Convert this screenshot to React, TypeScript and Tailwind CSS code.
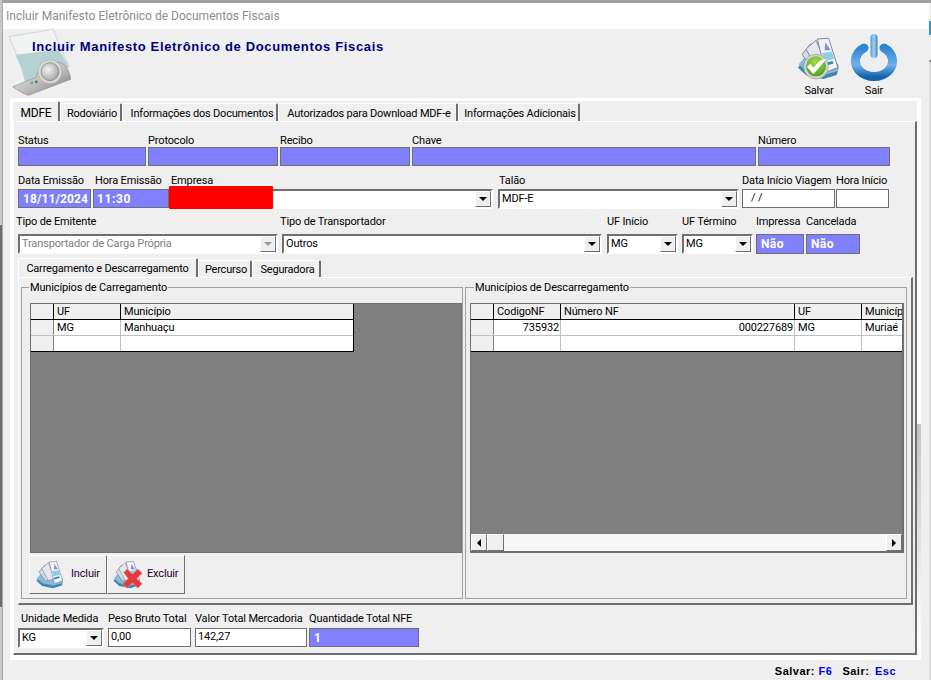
import React from "react";

function Docs() {
  return (
    <>
      <path d="M36 128 L62 92 L158 128 L152 150 L112 162 L62 152 Z" fill="#3f86b4" />
      <path d="M38 118 L66 84 L158 118 L156 138 L112 150 L64 140 Z" fill="#86bbd8" />
      <path d="M48 88 L74 56 L112 118 L78 130 Z" fill="#d5d9e4" stroke="#6f7889" strokeWidth="2.5" />
      <path d="M60 72 L90 46 L122 118 L90 128 Z" fill="#e4e7f0" stroke="#6f7889" strokeWidth="2.5" />
      <path d="M94 42 L128 40 L156 128 L118 142 Z" fill="#f2f4fb" stroke="#6a7488" strokeWidth="2.5" />
      <path d="M118 52 L134 76 L116 76 Z" fill="#7f8cdf" />
      <path d="M108 84 L138 80 L144 102 L114 108 Z" fill="#94cbe4" />
      <path d="M114 114 L140 108 L142 116 L116 122 Z" fill="#2f90aa" />
    </>
  );
}

function Stack({ size }: { size: number }) {
  return (
    <svg width={size} height={size} viewBox="34 38 128 128" className="shrink-0">
      <Docs />
    </svg>
  );
}

function Logo() {
  return (
    <svg width="72" height="72" viewBox="24 24 216 216" className="shrink-0">
      <defs>
        <linearGradient id="base" x1="0" y1="0" x2="1" y2="1">
          <stop offset="0" stopColor="#efefef" />
          <stop offset="0.55" stopColor="#bcbcbc" />
          <stop offset="1" stopColor="#6f6f6f" />
        </linearGradient>
        <radialGradient id="disc" cx="0.4" cy="0.4" r="0.7">
          <stop offset="0" stopColor="#f4f4f4" />
          <stop offset="1" stopColor="#9c9c9c" />
        </radialGradient>
      </defs>
      <path d="M27 50 L160 28 C172 65 192 105 207 140 L78 195 C68 145 47 95 27 50 Z" fill="#f1f3f2" stroke="#c4c8c8" strokeWidth="2" />
      <path d="M46 104 C90 100 135 95 177 88 L207 140 L78 195 C72 160 60 130 46 104 Z" fill="#b5d2d3" />
      <path d="M38 200 L108 172 C116 128 178 112 198 140 C206 152 211 165 212 178 L86 226 C70 222 52 210 38 200 Z" fill="url(#base)" stroke="#808080" strokeWidth="1.5" />
      <circle cx="150" cy="155" r="36" fill="#d9d9d9" stroke="#9a9a9a" strokeWidth="1.5" />
      <circle cx="150" cy="155" r="27" fill="url(#disc)" stroke="#7e7e7e" strokeWidth="2" />
      <circle cx="96" cy="188" r="4.5" fill="#5fbf50" />
      <circle cx="109" cy="185" r="4.5" fill="#5a66c8" />
      <circle cx="122" cy="180" r="4.5" fill="#e0cf40" />
    </svg>
  );
}

function SaveIcon() {
  return (
    <svg width="42" height="44" viewBox="36 36 126 132">
      <defs>
        <radialGradient id="green" cx="0.5" cy="0.3" r="0.75">
          <stop offset="0" stopColor="#a8de4e" />
          <stop offset="1" stopColor="#469a1d" />
        </radialGradient>
      </defs>
      <Docs />
      <circle cx="90" cy="125" r="37" fill="#d5d5d5" stroke="#979797" strokeWidth="2" />
      <circle cx="90" cy="124" r="30" fill="url(#green)" />
      <path d="M63 125 L82 148 L122 101 L104 105 L82 128 L73 116 Z" fill="#fff" />
    </svg>
  );
}

function PowerIcon() {
  return (
    <svg width="48" height="48" viewBox="0 0 48 48">
      <defs>
        <linearGradient id="ring" x1="0" y1="0" x2="0" y2="1">
          <stop offset="0" stopColor="#2f86cf" />
          <stop offset="0.6" stopColor="#6fb2e8" />
          <stop offset="1" stopColor="#1465b0" />
        </linearGradient>
        <linearGradient id="bar" x1="0" y1="0" x2="1" y2="0">
          <stop offset="0" stopColor="#4a98d8" />
          <stop offset="0.5" stopColor="#a9d3f2" />
          <stop offset="1" stopColor="#2f7fc6" />
        </linearGradient>
      </defs>
      <path d="M14 14 A18.5 15.5 0 1 0 34 14" fill="none" stroke="url(#ring)" strokeWidth="9" strokeLinecap="round" />
      <rect x="20.5" y="0" width="7" height="24" rx="3.5" fill="url(#bar)" />
    </svg>
  );
}

function CrossIcon() {
  return (
    <svg width="21" height="21" viewBox="0 0 24 24" className="absolute left-[14px] top-[12px]">
      <path d="M2 5 L6 1 L12 7 L18 1 L23 6 L17 12 L23 18 L18 23 L12 17 L6 23 L1 18 L7 12 Z" fill="#e8383c" stroke="#c8a0a2" strokeWidth="0.8" />
    </svg>
  );
}

function Tab({ label, active, className }: { label: string; active?: boolean; className: string }) {
  return (
    <div
      className={`flex items-center justify-center tracking-[-0.2px] whitespace-nowrap bg-[#efefef] border-r-2 border-r-[#6e6e6e] border-t border-t-white rounded-tr-[2px] ${
        active ? "" : "mt-[2px] pl-[3px] border-l border-l-white"
      } ${className}`}
    >
      {label}
    </div>
  );
}

function Label({ children, className }: { children: React.ReactNode; className: string }) {
  return <div className={`whitespace-nowrap leading-[13px] ${className}`}>{children}</div>;
}

function Blue({ className, children }: { className: string; children?: React.ReactNode }) {
  return (
    <div className={`bg-[#8080ff] border border-[#6f6f6f] text-white font-bold flex items-center overflow-hidden whitespace-nowrap ${className}`}>
      {children}
    </div>
  );
}

function Input({ className, children }: { className: string; children?: React.ReactNode }) {
  return (
    <div className={`bg-white border border-[#6f6f6f] flex items-center pl-[2px] overflow-hidden whitespace-nowrap ${className}`}>
      {children}
    </div>
  );
}

function Combo({ className, children, disabled }: { className: string; children?: React.ReactNode; disabled?: boolean }) {
  return (
    <div className={`flex bg-white border-2 border-t-[#707070] border-l-[#707070] border-b-white border-r-white ${className}`}>
      <div className={`flex-1 min-w-0 flex items-center pl-[2px] overflow-hidden whitespace-nowrap ${disabled ? "text-[#808080]" : ""}`}>{children}</div>
      <div className="w-[16px] bg-[#efefef] border border-t-white border-l-white border-b-[#707070] border-r-[#707070] flex items-center justify-center">
        <div className={`w-0 h-0 border-x-[4px] border-x-transparent border-t-[4px] ${disabled ? "border-t-[#9a9a9a]" : "border-t-black"}`} />
      </div>
    </div>
  );
}

function Cell({ className, children }: { className: string; children?: React.ReactNode }) {
  return <div className={`h-[15px] pt-[2px] flex items-center px-[3px] overflow-hidden whitespace-nowrap ${className}`}>{children}</div>;
}

function ActionButton({ label, cross }: { label: string; cross?: boolean }) {
  return (
    <div className={`relative w-[78px] h-[39px] bg-[#efefef] border border-t-white border-l-white border-b-[#707070] border-r-[#707070] flex items-center ${cross ? "pl-[5px]" : "pl-[6px]"}`}>
      <Stack size={28} />
      {cross ? <CrossIcon /> : null}
      <span className={cross ? "text-[#200030] ml-[6px]" : "text-[#200030] ml-[7px]"}>{label}</span>
    </div>
  );
}

export default function App() {
  return (
    <div className="w-[931px] h-[680px] flex overflow-hidden bg-[#efefef] text-black text-[11px] tracking-[-0.15px]" style={{ fontFamily: 'Roboto, "Liberation Sans", Arial, sans-serif' }}>
      <div className="w-[2px] flex flex-col">
        <div className="h-[225px] bg-[#c8c8c8]" />
        <div className="h-[382px] bg-[#6e6e6e]" />
        <div className="flex-1 bg-[#c8c8c8]" />
      </div>
      <div className="w-[927px] flex flex-col border-l border-l-[#a8a8a8]">
        <div className="h-[3px] bg-[#a0a0a0]" />
        <div className="h-[26px] bg-white pl-[3px] flex items-center text-[12px] tracking-[0px] text-[#8c8c8c]">
          Incluir Manifesto Eletrônico de Documentos Fiscais
        </div>
        <div className="flex-1 flex flex-col">
          <div className="h-[69px] flex justify-between pl-[5px] pr-[31px]">
            <div className="flex">
              <div className="-mt-[1px] mr-[-48px]"><Logo /></div>
              <div className="text-[13px] font-bold text-[#000080] tracking-[0.65px] mt-[10px] leading-[16px] z-10" style={{ fontFamily: '"Liberation Sans", Arial, sans-serif' }}>
                Incluir Manifesto Eletrônico de Documentos Fiscais
              </div>
            </div>
            <div className="flex gap-[8px]">
              <div className="w-[46px] flex flex-col pt-[8px]">
                <div className="pl-[2px] h-[47px]"><SaveIcon /></div>
                <div className="leading-[13px] text-center">Salvar</div>
              </div>
              <div className="w-[48px] flex flex-col items-center pt-[5px]">
                <PowerIcon />
                <div className="leading-[13px] mt-[2px]">Sair</div>
              </div>
            </div>
          </div>

          <div className="relative ml-[7px] w-[911px] h-[562px] bg-white p-[3px] pr-[4px] pb-[5px] flex flex-col">
            <div className="absolute right-0 bottom-[16px] w-[4px] h-[220px] bg-gradient-to-b from-[#c4c4c4] to-white" />
            <div className="h-[20px] flex bg-[#efefef]">
              <Tab label="MDFE" active className="w-[47px] pt-[3px] pl-[1px] text-[12px]" />
              <Tab label="Rodoviário" className="w-[62px] pt-[3px]" />
              <Tab label="Informações dos Documentos" className="w-[156px] pt-[3px] pl-[5px]" />
              <Tab label="Autorizados para Download MDF-e" className="w-[180px] pt-[3px]" />
              <Tab label="Informações Adicionais" className="w-[122px] pt-[3px]" />
            </div>
            <div className="flex-1 border-t border-t-white border-l border-l-white border-r-2 border-r-[#6e6e6e] border-b-2 border-b-[#6e6e6e] bg-[#efefef] pl-[4px] flex flex-col">
              <div className="flex gap-[2px] mt-[12px]">
                <div className="w-[128px] flex flex-col"><Label className="">Status</Label><Blue className="h-[19px]" /></div>
                <div className="w-[130px] flex flex-col"><Label className="">Protocolo</Label><Blue className="h-[19px]" /></div>
                <div className="w-[130px] flex flex-col"><Label className="">Recibo</Label><Blue className="h-[19px]" /></div>
                <div className="w-[344px] flex flex-col"><Label className="">Chave</Label><Blue className="h-[19px]" /></div>
                <div className="w-[132px] flex flex-col"><Label className="">Número</Label><Blue className="h-[19px]" /></div>
              </div>

              <div className="flex mt-[8px]">
                <div className="w-[73px] flex flex-col"><Label className="mb-[2px]">Data Emissão</Label>
                  <Blue className="h-[19px] pl-[4px] text-[12px] tracking-[0.1px]">18/11/2024</Blue></div>
                <div className="w-[76px] ml-[2px] flex flex-col"><Label className="mb-[2px] pl-[2px]">Hora Emissão</Label>
                  <Blue className="h-[19px] pl-[3px] text-[12px] tracking-[0.6px]">11:30</Blue></div>
                <div className="w-[323px] flex flex-col ml-[1px] relative"><Label className="mb-[2px] pl-[1px]">Empresa</Label>
                  <Combo className="h-[20px]" />
                  <div className="absolute left-[-1px] top-[12px] w-[104px] h-[23px] bg-[#ff0000] rounded-[1px]" />
                </div>
                <div className="w-[241px] ml-[5px] flex flex-col"><Label className="mb-[2px] pl-[1px]">Talão</Label>
                  <Combo className="h-[20px]">MDF-E</Combo></div>
                <div className="w-[93px] ml-[3px] flex flex-col"><Label className="mb-[2px]">Data Início Viagem</Label>
                  <Input className="h-[19px] pl-[8px]">/ /</Input></div>
                <div className="w-[53px] ml-[1px] flex flex-col"><Label className="mb-[2px]">Hora Início</Label>
                  <Input className="h-[19px]" /></div>
              </div>

              <div className="flex mt-[6px]">
                <div className="w-[260px] flex flex-col"><Label className="mb-[6px] -ml-[2px]">Tipo de Emitente</Label>
                  <Combo className="h-[20px]" disabled>Transportador de Carga Própria</Combo></div>
                <div className="w-[320px] ml-[4px] flex flex-col"><Label className="mb-[6px] -ml-[2px]">Tipo de Transportador</Label>
                  <Combo className="h-[20px]">Outros</Combo></div>
                <div className="w-[71px] ml-[5px] flex flex-col"><Label className="mb-[6px]">UF Início</Label>
                  <Combo className="h-[20px]">MG</Combo></div>
                <div className="w-[71px] ml-[4px] flex flex-col"><Label className="mb-[6px]">UF Término</Label>
                  <Combo className="h-[20px]">MG</Combo></div>
                <div className="w-[48px] ml-[3px] flex flex-col"><Label className="mb-[6px]">Impressa</Label>
                  <Blue className="h-[20px] pl-[4px] text-[12px] tracking-[0.4px]">Não</Blue></div>
                <div className="w-[54px] ml-[2px] flex flex-col"><Label className="mb-[6px]">Cancelada</Label>
                  <Blue className="h-[20px] pl-[4px] text-[12px] tracking-[0.4px]">Não</Blue></div>
              </div>

              <div className="mt-[4px] h-[19px] flex">
                <Tab label="Carregamento e Descarregamento" active className="w-[180px] pt-[2px] border-l border-l-white" />
                <Tab label="Percurso" className="w-[54px] pt-[2px]" />
                <Tab label="Seguradora" className="w-[69px] pt-[2px]" />
              </div>
              <div className="w-[895px] h-[328px] border-t border-t-white border-l border-l-white border-r-2 border-r-[#6e6e6e] border-b-2 border-b-[#6e6e6e] flex gap-[2px] pl-[2px] pt-[3px]">
                <fieldset className="w-[442px] h-[318px] border border-[#a0a0a0] pl-[8px]">
                  <legend className="-ml-[1px] px-[1px] leading-[13px]">Municípios de Carregamento</legend>
                  <div className="mt-[9px] w-[432px] h-[250px] bg-[#808080] border border-[#6e6e6e]">
                    <div className="w-[323px] border-r border-b border-black">
                      <div className="flex bg-[#efefef] border-b border-b-black">
                        <Cell className="w-[23px] border-r border-r-black" />
                        <Cell className="w-[67px] border-r border-r-black">UF</Cell>
                        <Cell className="flex-1">Município</Cell>
                      </div>
                      <div className="flex bg-white border-b border-b-[#c0c0c0]">
                        <Cell className="w-[23px] bg-[#efefef] border-r border-r-[#808080]" />
                        <Cell className="w-[67px] border-r border-r-[#c0c0c0]">MG</Cell>
                        <Cell className="flex-1">Manhuaçu</Cell>
                      </div>
                      <div className="flex bg-white">
                        <Cell className="w-[23px] bg-[#efefef] border-r border-r-[#808080]" />
                        <Cell className="w-[67px] border-r border-r-[#c0c0c0]" />
                        <Cell className="flex-1" />
                      </div>
                    </div>
                  </div>
                  <div className="flex mt-[2px] -ml-[1px]">
                    <ActionButton label="Incluir" />
                    <ActionButton label="Excluir" cross />
                  </div>
                </fieldset>
                <fieldset className="w-[442px] h-[318px] border border-[#a0a0a0] pl-[4px]">
                  <legend className="ml-[4px] px-[1px] leading-[13px]">Municípios de Descarregamento</legend>
                  <div className="mt-[9px] w-[434px] h-[250px] bg-[#808080] border-2 border-[#6e6e6e] border-t border-l flex flex-col justify-between">
                    <div className="bg-white">
                      <div className="flex bg-[#efefef] border-b border-b-black">
                        <Cell className="w-[23px] border-r border-r-black" />
                        <Cell className="w-[67px] border-r border-r-black">CodigoNF</Cell>
                        <Cell className="w-[234px] border-r border-r-black">Número NF</Cell>
                        <Cell className="w-[67px] border-r border-r-black">UF</Cell>
                        <Cell className="flex-1 pr-0">Município</Cell>
                      </div>
                      <div className="flex border-b border-b-[#c0c0c0]">
                        <Cell className="w-[23px] bg-[#efefef] border-r border-r-[#808080]" />
                        <Cell className="w-[67px] justify-end border-r border-r-[#c0c0c0] pr-[1px]">735932</Cell>
                        <Cell className="w-[234px] justify-end border-r border-r-[#c0c0c0] pr-[1px]">000227689</Cell>
                        <Cell className="w-[67px] border-r border-r-[#c0c0c0]">MG</Cell>
                        <Cell className="flex-1">Muriaé</Cell>
                      </div>
                      <div className="flex border-b border-b-black">
                        <Cell className="w-[23px] bg-[#efefef] border-r border-r-[#808080]" />
                        <Cell className="w-[67px] border-r border-r-[#c0c0c0]" />
                        <Cell className="w-[234px] border-r border-r-[#c0c0c0]" />
                        <Cell className="w-[67px] border-r border-r-[#c0c0c0]" />
                        <Cell className="flex-1" />
                      </div>
                    </div>
                    <div className="h-[17px] bg-[#f6f6f6] flex justify-between">
                      <div className="flex">
                        <div className="w-[16px] bg-[#efefef] border border-t-white border-l-white border-b-[#707070] border-r-[#707070] flex items-center justify-center">
                          <div className="w-0 h-0 border-y-[4px] border-y-transparent border-r-[4px] border-r-black" />
                        </div>
                        <div className="w-[17px] bg-[#efefef] border border-t-white border-l-white border-b-[#707070] border-r-[#707070]" />
                      </div>
                      <div className="w-[16px] bg-[#efefef] border border-t-white border-l-white border-b-[#707070] border-r-[#707070] flex items-center justify-center">
                        <div className="w-0 h-0 border-y-[4px] border-y-transparent border-l-[4px] border-l-black" />
                      </div>
                    </div>
                  </div>
                </fieldset>
              </div>

              <div className="flex mt-[7px]">
                <div className="w-[86px] flex flex-col"><Label className="ml-[3px] mb-[3px]">Unidade Medida</Label>
                  <Combo className="h-[20px]">KG</Combo></div>
                <div className="w-[83px] ml-[4px] flex flex-col"><Label className="mb-[3px]">Peso Bruto Total</Label>
                  <Input className="h-[19px]">0,00</Input></div>
                <div className="w-[112px] ml-[4px] flex flex-col"><Label className="mb-[3px]">Valor Total Mercadoria</Label>
                  <Input className="h-[19px]">142,27</Input></div>
                <div className="w-[110px] ml-[2px] flex flex-col"><Label className="mb-[3px]">Quantidade Total NFE</Label>
                  <Blue className="h-[19px] pl-[4px] text-[12px]">1</Blue></div>
              </div>
            </div>
          </div>
          <div className="flex-1 flex justify-end items-center pt-[2px] gap-[10px] pr-[33px] font-bold text-[11px] tracking-[0.5px]" style={{ fontFamily: '"Liberation Sans", Arial, sans-serif' }}>
            <div>Salvar: <span className="text-[#0000ff]">F6</span></div>
            <div>Sair: <span className="text-[#0000ff] ml-[2px]">Esc</span></div>
          </div>
        </div>
      </div>
      <div className="flex-1 flex flex-col">
        <div className="h-[3px] bg-[#a0a0a0]" />
        <div className="h-[18px] bg-[#efefef]" />
        <div className="h-[14px] bg-[#3a8fd0]" />
        <div className="h-[25px] bg-[#efefef]" />
        <div className="h-[2px] bg-[#8a8a8a]" />
        <div className="flex-1 bg-[#dcdcdc]" />
      </div>
    </div>
  );
}
